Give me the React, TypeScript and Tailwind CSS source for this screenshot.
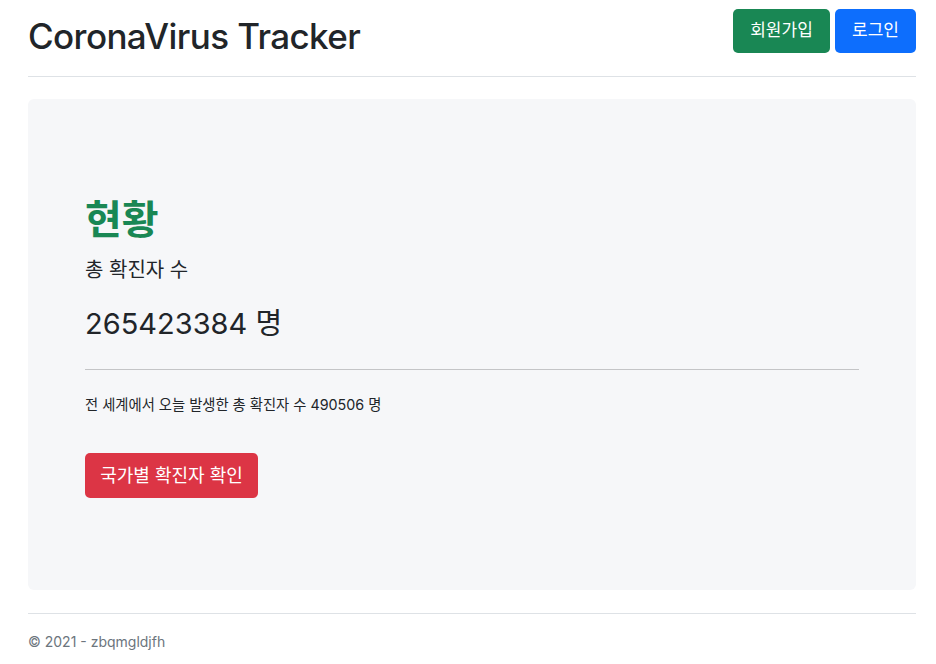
export default function App() {
  const font = { fontFamily: 'Inter, "Noto Sans CJK KR", sans-serif' };
  return (
    <div className="min-h-screen bg-white text-[#212529]" style={font}>
      <div className="pl-[28px] pr-[20px]">
        <header className="flex items-center justify-between h-[77px] border-b border-[#dee2e6]">
          <h1 className="text-[35px] font-medium tracking-[-0.6px] leading-none pb-[4px]">CoronaVirus Tracker</h1>
          <div className="flex gap-[5px] self-start mt-[9px]">
            <button className="h-[44px] w-[97px] rounded-[5px] bg-[#198754] text-white text-[17px]">회원가입</button>
            <button className="h-[44px] w-[81px] rounded-[5px] bg-[#0d6efd] text-white text-[17px]">로그인</button>
          </div>
        </header>

        <main className="mt-[22px] bg-[#f6f7f9] rounded-[6px] h-[491px] px-[57px] pt-[97px]">
          <h2 className="text-[40px] font-bold text-[#198754] leading-[48px]">현황</h2>
          <p className="text-[20px] mt-[14px] leading-[24px]">총 확진자 수</p>
          <p className="text-[29px] mt-[25px] leading-[34px]">265423384 명</p>
          <hr className="mt-[28px] border-t border-[#c4c5c7]" />
          <p className="text-[14.3px] mt-[25px] leading-[20px]">전 세계에서 오늘 발생한 총 확진자 수 490506 명</p>
          <button className="mt-[38px] h-[45px] w-[173px] rounded-[5px] bg-[#dc3545] text-white text-[18px]">국가별 확진자 확인</button>
        </main>

        <footer className="mt-[23px] border-t border-[#dee2e6] pt-[17px]">
          <p className="text-[14px] text-[#6c757d]">© 2021 - zbqmgldjfh</p>
        </footer>
      </div>
    </div>
  );
}
